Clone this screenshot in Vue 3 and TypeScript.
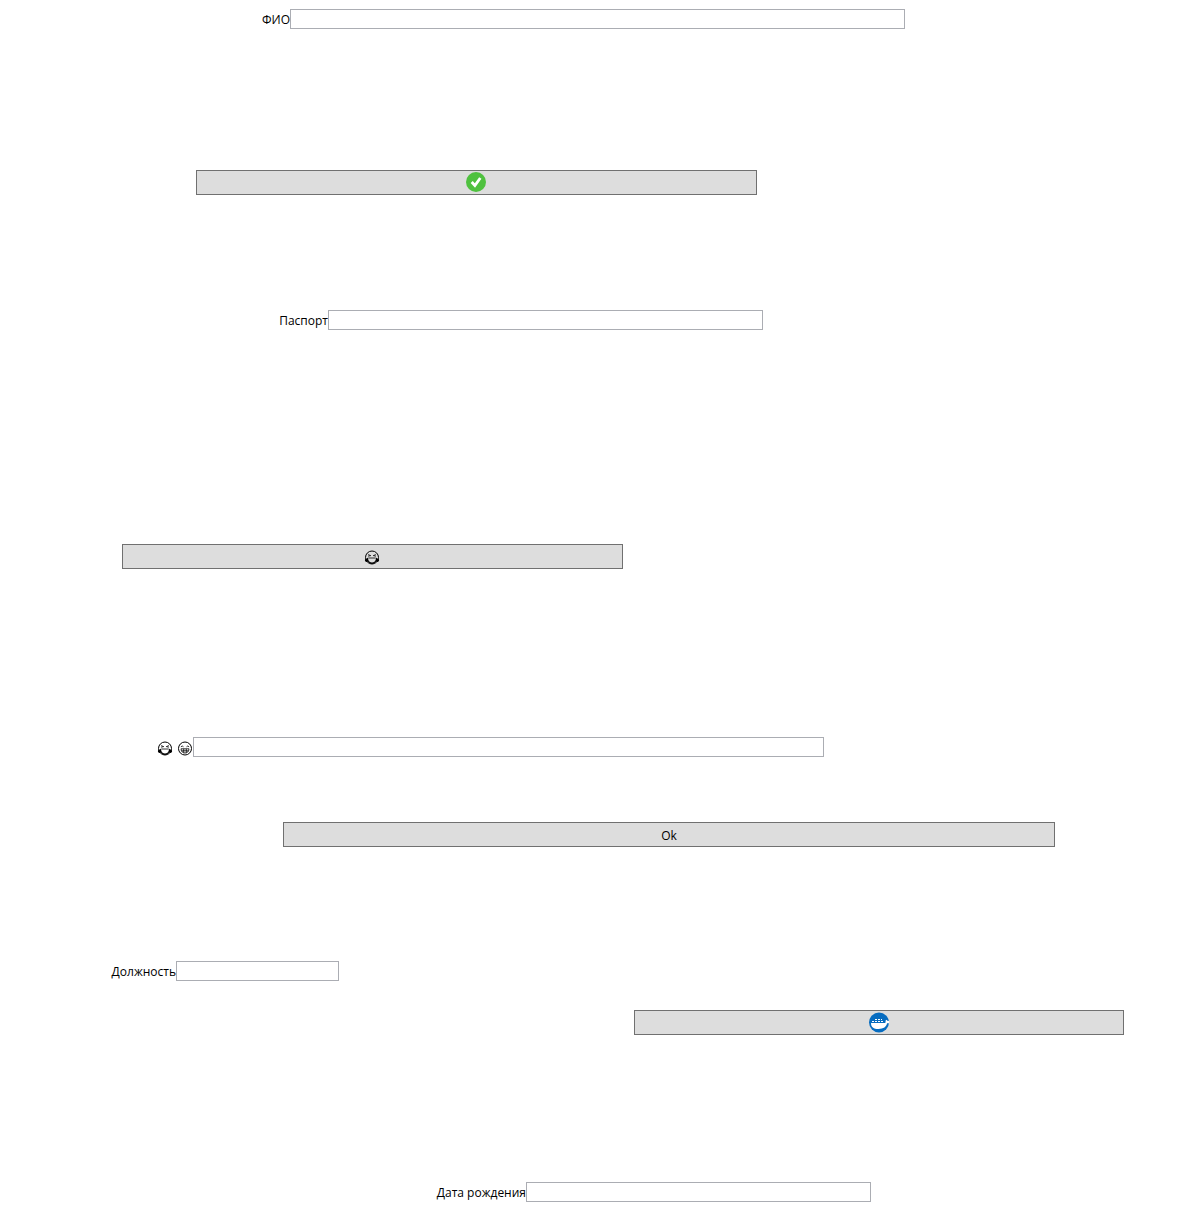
<script setup lang="ts">
type BadgeName = 'check' | 'whale'
type FaceName = 'joy' | 'grin'

interface Row {
  id: string
  kind: 'field' | 'button'
  gap: number
  start: number
  size: number
  text?: string
  badge?: BadgeName
  faces?: FaceName[]
  title?: string
}

interface Face {
  thin: string
  solid: string
}

// start and size are shares of the row width, out of `total`
const total = 1196

const rows: Row[] = [
  { id: 'name', kind: 'field', gap: 9, start: 290, size: 615, text: 'ФИО' },
  { id: 'accept', kind: 'button', gap: 141, start: 196, size: 561, badge: 'check', title: 'Принять' },
  { id: 'passport', kind: 'field', gap: 115, start: 328, size: 435, text: 'Паспорт' },
  { id: 'laugh', kind: 'button', gap: 214, start: 122, size: 501, faces: ['joy'], title: '😂' },
  { id: 'mood', kind: 'field', gap: 168, start: 193, size: 631, faces: ['joy', 'grin'], title: '😂 😁' },
  { id: 'ok', kind: 'button', gap: 65, start: 283, size: 772, text: 'Ok' },
  { id: 'position', kind: 'field', gap: 114, start: 176, size: 163, text: 'Должность' },
  { id: 'docker', kind: 'button', gap: 29, start: 634, size: 490, badge: 'whale', title: 'Docker' },
  { id: 'birth', kind: 'field', gap: 147, start: 526, size: 345, text: 'Дата рождения' },
]

const faces: Record<FaceName, Face> = {
  joy: {
    thin: 'M3.6 4.6l2.6 1-2.6.6M11.4 4.6l-2.6 1 2.6.6M4 8h7',
    solid: 'M3.7 7.4L.5 9.5c-.6 2.2 1.6 3.1 2.9 2Q5.2 14 7.5 14t4.1-2.5c1.3 1.1 3.5.2 2.9-2l-3.2-2.1v2Q10.5 12.4 7.5 12.4T3.7 9.4z',
  },
  grin: {
    thin: 'M3.4 5.8q1.3-1.6 2.6 0M9 5.8q1.3-1.6 2.6 0M3.5 7.8h8q-.4 4.2-4 4.2t-4-4.2zM3.9 9.8h7.2M6.2 7.8v4M8.8 7.8v4',
    solid: '',
  },
}

const rowStyle = (row: Row) => ({
  marginTop: `${row.gap}px`,
  gridTemplateColumns: `${row.start}fr ${row.size}fr ${total - row.start - row.size}fr`,
})
</script>

<template>
  <form class="form" @submit.prevent>
    <div v-for="row in rows" :key="row.id" class="row" :style="rowStyle(row)">
      <component
        :is="row.kind === 'field' ? 'label' : 'button'"
        :class="row.kind === 'field' ? 'label' : 'button'"
        :for="row.kind === 'field' ? row.id : undefined"
        :type="row.kind === 'button' ? 'button' : undefined"
        :aria-label="row.title"
      >
        <template v-if="row.text">{{ row.text }}</template>
        <svg v-for="name in row.faces" :key="name" class="face" viewBox="0.5 0 15 15" aria-hidden="true">
          <circle cx="7.5" cy="7.5" r="6.5" class="outline" />
          <path class="thin" :d="faces[name].thin" />
          <path :d="faces[name].solid" />
        </svg>
        <svg v-if="row.badge === 'check'" class="badge" viewBox="0 0 21 21" aria-hidden="true">
          <circle cx="10" cy="10" r="10" fill="#4fc13f" />
          <path d="M5.7 10l3.2 3.5 5.4-7.5" fill="none" stroke="#fff" stroke-width="2.8" />
        </svg>
        <svg v-if="row.badge === 'whale'" class="badge" viewBox="0 0 21 21" aria-hidden="true">
          <circle cx="10" cy="10.5" r="10" fill="#066cc0" />
          <path
            d="M2 11h13.5c1 0 1.3-.7 1-2.300l1-.9 1.300 1.300H20v2.200h-2c-.4 3.500-3.600 5.700-8.500 5.700C4.500 17 2 15 2 11z"
            fill="#fff"
          />
          <path d="M3 9.500h11M6 7.500h7" fill="none" stroke="#fff" stroke-width="1" stroke-dasharray="2 1" />
        </svg>
      </component>
      <input v-if="row.kind === 'field'" :id="row.id" class="input" type="text" :name="row.id" />
    </div>
  </form>
</template>

<style>
body {
  margin: 0;
  background: #fff;
}
</style>

<style scoped>
.form {
  display: flex;
  flex-direction: column;
  padding-bottom: 28px;
  font: 12px/16px "Open Sans", "Noto Sans", sans-serif;
  color: #000;
}
.row {
  display: grid;
}
.label {
  display: flex;
  justify-content: flex-end;
  align-items: center;
  gap: 5px;
  padding-top: 2px;
  white-space: nowrap;
}
.input {
  grid-column: 2;
  box-sizing: border-box;
  width: 100%;
  min-width: 0;
  height: 20px;
  padding: 0 2px;
  border: 1px solid #abadb3;
  border-radius: 0;
  background: #fff;
  font: inherit;
}
.button {
  grid-column: 2;
  display: flex;
  justify-content: center;
  align-items: center;
  box-sizing: border-box;
  min-width: 0;
  height: 25px;
  padding: 2px 0 0;
  border: 1px solid #707070;
  border-radius: 0;
  background: #ddd;
  font: inherit;
  color: inherit;
}
.badge {
  width: 21px;
  height: 21px;
  margin-top: -2px;
}
.face {
  width: 15px;
  height: 15px;
  overflow: visible;
}
.outline {
  fill: none;
  stroke: #000;
}
.thin {
  fill: none;
  stroke: #000;
  stroke-width: 0.8;
}
</style>
